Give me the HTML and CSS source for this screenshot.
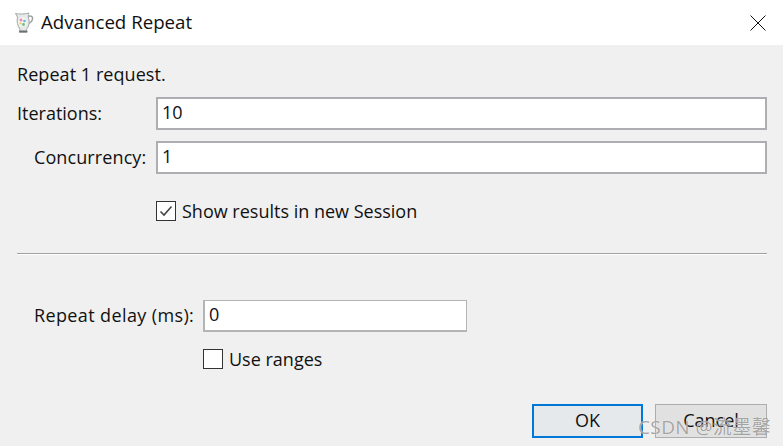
FILE: index.html
```html
<!DOCTYPE html>
<html lang="en">
<head>
    <meta charset="UTF-8">
    <title>Advanced Repeat</title>
    <link rel="stylesheet" href="styles.css">
</head>
<body>
    <div class="dialog">
        <div class="title-bar">
            <svg class="app-icon" width="22" height="22" viewBox="0 0 22 22">
                <path d="M15 4.500c3-1 5 0 4.500 2.500-.4 2.500-2.500 4-5 5" fill="none" stroke="#9aa0a0" stroke-width="1.500"/>
                <path d="M2.500 1.500c3 .8 9 .8 13.500-.5-.8 2-1 4 0 7 .8 3-.5 7-2.500 9.500l.5 2.500H6.500l.5-2.500C4.500 14 3.500 9 4.500 5z" fill="#e6e9e9" stroke="#a4a9a9"/>
                <circle cx="9.500" cy="10" r="4.500" fill="#f6f6f0"/>
                <circle cx="8" cy="8" r="1.500" fill="#e78ab5"/>
                <circle cx="11.500" cy="9" r="1.300" fill="#63b8d8"/>
                <circle cx="10.500" cy="12.500" r="1.400" fill="#69bf8c"/>
                <circle cx="7.500" cy="11.500" r="1.100" fill="#e8c75a"/>
                <path d="M6.500 18.500h7.500l.5 2H6z" fill="#6b6f6f"/>
            </svg>
            <span class="title">Advanced Repeat</span>
            <svg class="close-icon" width="16" height="16" viewBox="0 0 16 16">
                <path d="M.5.500l15 15M15.500.500l-15 15" stroke="#111" fill="none"/>
            </svg>
        </div>

        <div class="content">
            <div class="summary">Repeat 1 request.</div>

            <div class="row row-iterations">
                <label class="label label-iterations">Iterations:</label>
                <div class="input">10</div>
            </div>
            <div class="row row-concurrency">
                <label class="label label-concurrency">Concurrency:</label>
                <div class="input">1</div>
            </div>
            <div class="check-row check-session">
                <span class="checkbox">
                    <svg width="16" height="16" viewBox="0 0 16 16">
                        <path d="M2.500 8.500l3.500 3.500 7.500-8.500" fill="none" stroke="#444" stroke-width="1.600"/>
                    </svg>
                </span>
                <span>Show results in new Session</span>
            </div>

            <div class="divider"></div>

            <div class="row row-delay">
                <label class="label label-delay">Repeat delay (ms):</label>
                <div class="input input-delay">0</div>
            </div>
            <div class="check-row check-ranges">
                <span class="checkbox"></span>
                <span>Use ranges</span>
            </div>

            <div class="buttons">
                <div class="button button-default">OK</div>
                <div class="button button-disabled">Cancel</div>
            </div>
        </div>
    </div>
    <div class="watermark">CSDN @流墨馨</div>
</body>
</html>
```
FILE: styles.css
```css
html, body {
    margin: 0;
    height: 100%;
}
body {
    width: 784px;
    height: 446px;
    overflow: hidden;
    background-color: #fff;
    font-family: "Open Sans", "Noto Sans CJK SC", sans-serif;
    font-size: 18px;
    color: #111;
    position: relative;
}
.dialog {
    width: 783px;
    height: 445px;
    margin-top: 1px;
    display: flex;
    flex-direction: column;
}
.title-bar {
    height: 44px;
    flex-shrink: 0;
    background-color: #fff;
    display: flex;
    align-items: center;
    padding: 0 17px 0 13px;
}
.app-icon {
    margin-right: 6px;
}
.title {
    flex: 1;
    font-size: 18.7px;
    line-height: 24px;
    padding-bottom: 3px;
}
.content {
    flex: 1;
    background-color: #f0f0f0;
    padding: 0 16px 0 17px;
}
.summary {
    height: 24px;
    margin-top: 17px;
    line-height: 24px;
    letter-spacing: 0.06px;
}
.row {
    display: flex;
    align-items: center;
}
.row-iterations {
    margin-top: 11px;
}
.row-concurrency {
    margin-top: 11px;
}
.label {
    line-height: 24px;
    padding-bottom: 2px;
}
.label-iterations {
    width: 139px;
}
.label-concurrency {
    width: 122px;
    margin-left: 17px;
    letter-spacing: 0.1px;
}
.label-delay {
    width: 169px;
    margin-left: 17px;
    letter-spacing: 0.38px;
}
.input {
    flex: 1;
    height: 29px;
    line-height: 27px;
    padding: 0 4px;
    background-color: #fff;
    border: 2px solid #adadb2;
}
.input-delay {
    flex: none;
    width: 253px;
    border-color: #b4b4b4;
    border-width: 1px 1px 2px 2px;
}
.check-row {
    display: flex;
    align-items: center;
    gap: 6px;
}
.check-session {
    margin: 25px 0 0 139px;
}
.check-ranges {
    margin: 15px 0 0 186px;
}
.checkbox {
    width: 18px;
    height: 18px;
    background-color: #fff;
    border: 1px solid #333;
    display: flex;
    align-items: center;
    justify-content: center;
}
.divider {
    height: 1px;
    margin-top: 30px;
    background-color: #a0a0a0;
    border-bottom: 1px solid #fff;
}
.row-delay {
    margin-top: 45px;
}
.buttons {
    display: flex;
    justify-content: flex-end;
    gap: 12px;
    margin-top: 33px;
}
.button {
    height: 34px;
    box-sizing: border-box;
    text-align: center;
}
.button-default {
    width: 111px;
    line-height: 28px;
    background-color: #e5e9ec;
    border: 2px solid #0078d7;
}
.button-disabled {
    width: 112px;
    line-height: 30px;
    background-color: #e1e1e1;
    border: 1px solid #adadad;
}
/* Watermark sits over the buttons */
.watermark {
    position: absolute;
    left: 638px;
    top: 414px;
    font-size: 19px;
    line-height: 26px;
    letter-spacing: 0.4px;
    white-space: nowrap;
    color: rgba(125, 125, 125, 0.7);
    text-shadow: 0 0 1px #fff;
}
```
